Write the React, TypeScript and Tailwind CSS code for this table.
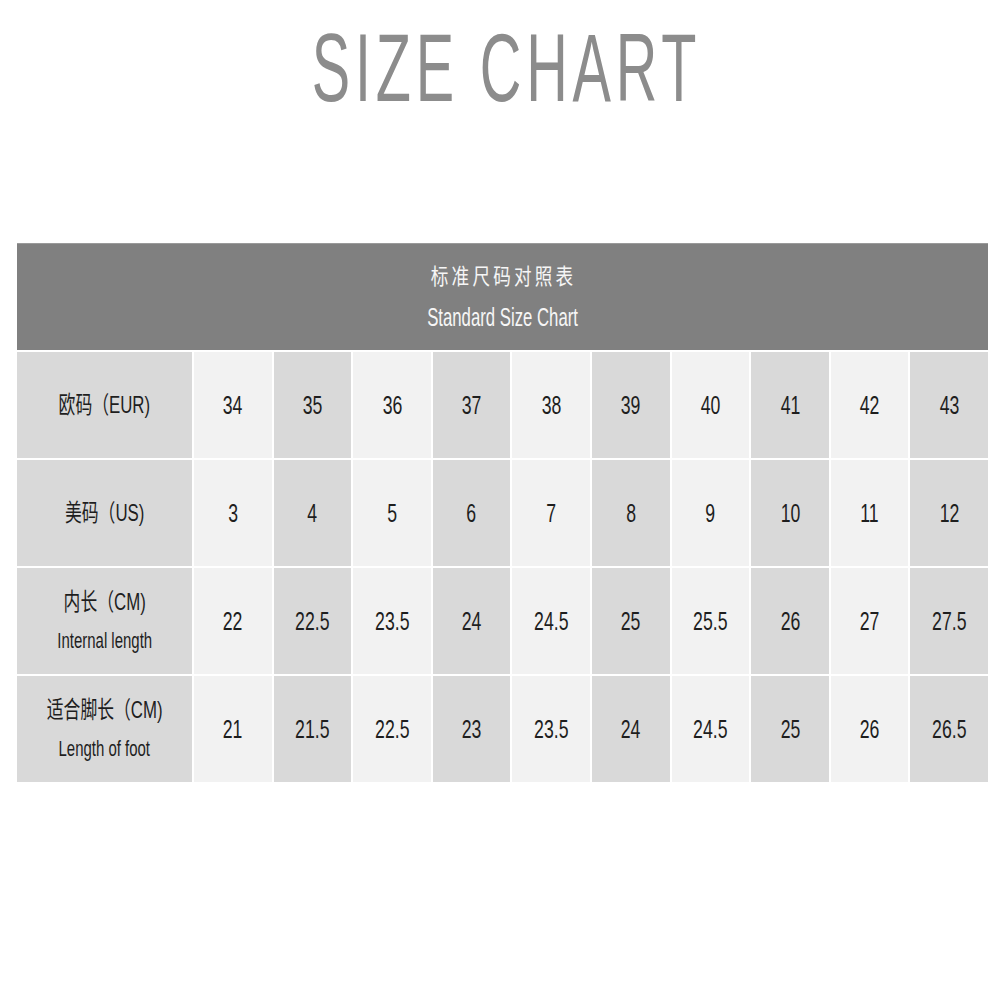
const FONT = "font-['Liberation_Sans','Noto_Sans_CJK_SC',sans-serif]";

const rows: { label: string; sub?: string; values: string[] }[] = [
  { label: '欧码（EUR)', values: ['34', '35', '36', '37', '38', '39', '40', '41', '42', '43'] },
  { label: '美码（US)', values: ['3', '4', '5', '6', '7', '8', '9', '10', '11', '12'] },
  {
    label: '内长（CM)',
    sub: 'Internal length',
    values: ['22', '22.5', '23.5', '24', '24.5', '25', '25.5', '26', '27', '27.5'],
  },
  {
    label: '适合脚长（CM)',
    sub: 'Length of foot',
    values: ['21', '21.5', '22.5', '23', '23.5', '24', '24.5', '25', '26', '26.5'],
  },
];

function LabelCell({ label, sub }: { label: string; sub?: string }) {
  return (
    <div className="bg-[#d9d9d9] h-[106px] flex flex-col items-center justify-center text-[#1e1e1e]">
      {sub ? (
        <>
          <span className="inline-block scale-x-[0.7] text-[24px] leading-[39px] whitespace-nowrap">
            {label}
          </span>
          <span className="inline-block scale-x-[0.68] text-[22px] leading-[39px] whitespace-nowrap">
            {sub}
          </span>
        </>
      ) : (
        <span className="inline-block scale-x-[0.7] text-[24px] leading-none whitespace-nowrap">
          {label}
        </span>
      )}
    </div>
  );
}

export default function App() {
  return (
    <div className={`w-[1000px] h-[1000px] bg-white ${FONT}`}>
      {/* Title */}
      <div className="pt-[20px] flex justify-center pl-[12px]">
        <h1 className="inline-block scale-x-[0.6] tracking-[8px] text-[96px] leading-none text-[#8c8c8c] whitespace-nowrap">
          SIZE CHART
        </h1>
      </div>

      {/* Table */}
      <div className="mt-[127px] ml-[17px] w-[971px] grid grid-cols-[175px_repeat(10,1fr)] gap-[2px]">
        <div className="col-span-11 h-[107px] bg-[#808080] border-t border-[#9a9a9a] flex flex-col items-center justify-center text-[#f6f6f6]">
          <span className="inline-block text-[22px] leading-[41px] tracking-[4px] scale-x-[0.8] pl-[4px] whitespace-nowrap">
            标准尺码对照表
          </span>
          <span className="inline-block scale-x-[0.67] text-[25px] leading-[41px] whitespace-nowrap">
            Standard Size Chart
          </span>
        </div>

        {rows.map((row) => (
          <div key={row.label} className="contents">
            <LabelCell label={row.label} sub={row.sub} />
            {row.values.map((v, i) => (
              <div
                key={i}
                className={`h-[106px] flex items-center justify-center text-[#1e1e1e] ${
                  i % 2 === 0 ? 'bg-[#f2f2f2]' : 'bg-[#d9d9d9]'
                }`}
              >
                <span className="inline-block scale-x-[0.68] text-[26px] leading-none">{v}</span>
              </div>
            ))}
          </div>
        ))}
      </div>
    </div>
  );
}
